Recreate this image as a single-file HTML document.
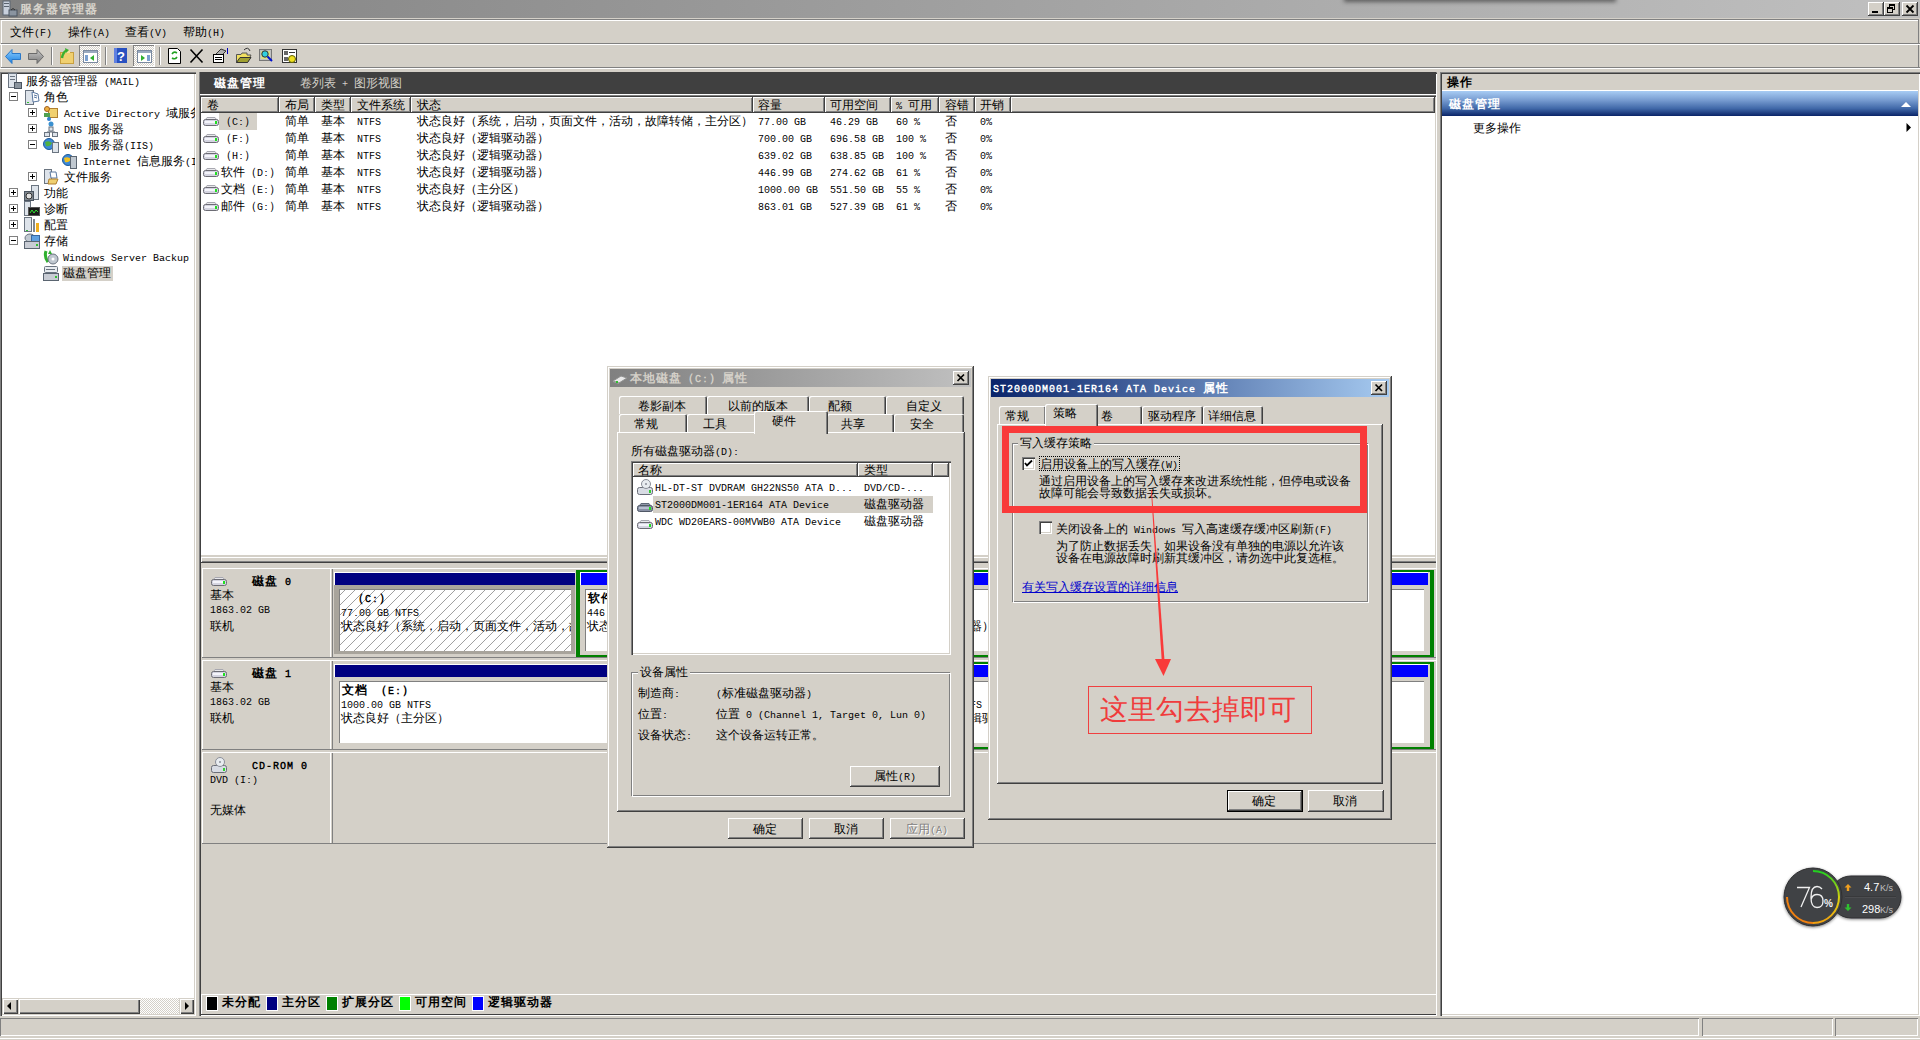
<!DOCTYPE html>
<html><head><meta charset="utf-8">
<style>
@font-face{font-family:"SS";src:local("Liberation Mono");size-adjust:83.333%}
html,body{margin:0;padding:0}
body{width:1920px;height:1040px;overflow:hidden;position:relative;background:#d4d0c8;font-family:"SS","Liberation Mono",sans-serif;font-size:12px;color:#000}
.a{position:absolute}
.t{position:absolute;white-space:pre;line-height:12px;font-size:12px;margin-top:2px}
.b{font-weight:bold;letter-spacing:1px}
.w{background:#fff}
.g{background:#d4d0c8}
.hl{position:absolute;height:1px}
.vl{position:absolute;width:1px}
.btn{box-shadow:inset -1px -1px #404040,inset 1px 1px #fff,inset -2px -2px #808080;background:#d4d0c8}
.sb{background:#d4d0c8;box-shadow:inset 1px 1px #d4d0c8,inset 2px 2px #fff,inset -1px -1px #404040,inset -2px -2px #808080}
svg{position:absolute;overflow:visible}
</style></head><body>

<!-- ===== title bar ===== -->
<div class="a" style="left:0;top:0;width:1920px;height:18px;background:linear-gradient(90deg,#808080,#c0c0c0)"></div>
<div class="a" style="left:1345px;top:-6px;width:270px;height:6px;background:#707070;box-shadow:0 1px 4px 1px rgba(40,40,40,.6)"></div>
<div class="t b" style="left:20px;top:3px;color:#d8d4cc">服务器管理器</div>
<div class="a btn" style="left:1868px;top:2px;width:16px;height:14px"><div class="a" style="left:4px;top:9px;width:6px;height:2px;background:#000"></div></div>
<div class="a btn" style="left:1884px;top:2px;width:16px;height:14px"><div class="a" style="left:5px;top:2px;width:6px;height:6px;border:1px solid #000;border-top-width:2px;box-sizing:border-box;background:transparent"></div><div class="a" style="left:3px;top:5px;width:6px;height:6px;border:1px solid #000;border-top-width:2px;box-sizing:border-box;background:#d4d0c8"></div></div>
<div class="a btn" style="left:1902px;top:2px;width:16px;height:14px"><svg width="16" height="14" style="left:0;top:0"><path d="M4.5 3.5 L11.5 10.5 M11.5 3.5 L4.5 10.5" stroke="#000" stroke-width="1.8"/></svg></div>
<svg width="16" height="16" style="left:2px;top:1px"><rect x="1" y="0" width="7" height="14" fill="#c8d0dc" stroke="#5a6470" stroke-width="1"/><rect x="2" y="2" width="5" height="1" fill="#5a6470"/><rect x="2" y="5" width="5" height="1" fill="#5a6470"/><rect x="7" y="9" width="8" height="6" fill="#8a94a0" stroke="#4a5460"/><path d="M9 9 Q11 6 13 9" stroke="#333" fill="none"/></svg>



<!-- ===== menu bar ===== -->
<div class="hl" style="left:0;top:19px;width:1919px;background:#808080"></div>
<div class="hl" style="left:1px;top:20px;width:1917px;background:#fff"></div>
<div class="vl" style="left:1px;top:20px;height:23px;background:#fff"></div>
<div class="vl" style="left:1918px;top:19px;height:50px;background:#808080"></div>
<div class="hl" style="left:1px;top:43px;width:1919px;background:#808080"></div>
<div class="hl" style="left:0;top:44px;width:1920px;background:#fff"></div>
<div class="t" style="left:10px;top:26px">文件(F)</div>
<div class="t" style="left:68px;top:26px">操作(A)</div>
<div class="t" style="left:125px;top:26px">查看(V)</div>
<div class="t" style="left:183px;top:26px">帮助(H)</div>

<!-- ===== toolbar ===== -->
<div class="vl" style="left:1px;top:45px;height:22px;background:#fff"></div>
<div class="hl" style="left:1px;top:67px;width:1919px;background:#808080"></div>
<div class="hl" style="left:0;top:68px;width:1920px;background:#fff"></div>
<svg width="320" height="24" style="left:0;top:45px">
<defs>
<pattern id="dots" width="2" height="2" patternUnits="userSpaceOnUse"><rect width="2" height="2" fill="#fff"/><rect width="1" height="1" fill="#d4d0c8"/><rect x="1" y="1" width="1" height="1" fill="#d4d0c8"/></pattern>
<linearGradient id="blueArr" x1="0" y1="0" x2="0" y2="1"><stop offset="0" stop-color="#8fd0ff"/><stop offset="1" stop-color="#1a7fe0"/></linearGradient>
<linearGradient id="grayArr" x1="0" y1="0" x2="0" y2="1"><stop offset="0" stop-color="#c8c8c8"/><stop offset="1" stop-color="#7a7a7a"/></linearGradient>
</defs>
<path d="M5.5 11.5 L12 4.5 L12 8.5 L20.5 8.5 L20.5 14.5 L12 14.5 L12 18.5 Z" fill="url(#blueArr)" stroke="#2a78c8"/>
<path d="M43.5 11.5 L37 4.5 L37 8.5 L28.5 8.5 L28.5 14.5 L37 14.5 L37 18.5 Z" fill="url(#grayArr)" stroke="#6a6a6a"/>
<rect x="51" y="2" width="1" height="18" fill="#808080"/><rect x="52" y="2" width="1" height="18" fill="#fff"/>
<rect x="60.5" y="7.5" width="13" height="11" fill="#f0d070" stroke="#c8a040"/><rect x="64" y="5" width="6" height="3" fill="#f6e0a0"/>
<path d="M62 13 Q63 7 67 5" stroke="#3ab030" stroke-width="2.5" fill="none"/><path d="M65 3 L69 5 L66 8 Z" fill="#3ab030"/>
<rect x="79" y="0" width="22" height="22" fill="url(#dots)"/><rect x="79" y="0" width="22" height="1" fill="#808080"/><rect x="79" y="0" width="1" height="22" fill="#808080"/><rect x="79" y="21" width="22" height="1" fill="#fff"/><rect x="100" y="0" width="1" height="22" fill="#fff"/>
<rect x="83.5" y="5.5" width="14" height="12" fill="#fff" stroke="#7a8aa0"/><rect x="84" y="6" width="13" height="2" fill="#9aaac0"/><rect x="85" y="10" width="3" height="6" fill="#7aa0d0"/><path d="M94 10 L90 13 L94 16 Z" fill="#30b030"/>
<rect x="105" y="2" width="1" height="18" fill="#808080"/><rect x="106" y="2" width="1" height="18" fill="#fff"/>
<rect x="114" y="3" width="13" height="15" fill="#2850c0"/><rect x="114" y="3" width="3" height="15" fill="#6080e0"/><text x="117" y="16" font-family="Liberation Sans" font-size="13" font-weight="bold" fill="#fff">?</text>
<rect x="133" y="0" width="22" height="22" fill="url(#dots)"/><rect x="133" y="0" width="22" height="1" fill="#808080"/><rect x="133" y="0" width="1" height="22" fill="#808080"/><rect x="133" y="21" width="22" height="1" fill="#fff"/><rect x="154" y="0" width="1" height="22" fill="#fff"/>
<rect x="137.5" y="5.5" width="14" height="12" fill="#fff" stroke="#7a8aa0"/><rect x="138" y="6" width="13" height="2" fill="#9aaac0"/><path d="M141 10 L145 13 L141 16 Z" fill="#30b030"/><rect x="147" y="10" width="3" height="6" fill="#7aa0d0"/>
<rect x="159" y="2" width="1" height="18" fill="#808080"/><rect x="160" y="2" width="1" height="18" fill="#fff"/>
<path d="M168.5 3.5 L177.5 3.5 L180.5 6.5 L180.5 18.5 L168.5 18.5 Z" fill="#fff" stroke="#000"/>
<path d="M172 9 Q174 6 177 8 M177 12 Q175 15 172 13" stroke="#20a020" stroke-width="1.6" fill="none"/>
<path d="M190.5 4.5 L202.5 17.5 M202.5 4.5 L190.5 17.5" stroke="#000" stroke-width="1.6"/>
<rect x="213.5" y="9.5" width="10" height="8" fill="#fff" stroke="#000"/><rect x="215" y="12" width="7" height="1" fill="#000"/><rect x="215" y="14" width="7" height="1" fill="#000"/><path d="M216 9 L221 4 L226 6 L223 9" fill="#b0b0b0" stroke="#333"/><rect x="227" y="3" width="1" height="6" fill="#0000c0"/>
<path d="M236.5 9.5 L241 9.5 L242 8 L247 8 L247 10 L251 10 L247.5 17.5 L236.5 17.5 Z" fill="#f0e060" stroke="#555"/><path d="M236.5 17.5 L240 12.5 L251 12.5 L247.5 17.5 Z" fill="#a0a030" stroke="#333"/><path d="M244 5 Q248 1 250 6" stroke="#333" fill="none"/>
<rect x="259.5" y="4.5" width="12" height="11" fill="#c0c0c0" stroke="#777"/><rect x="261" y="6" width="9" height="8" fill="#f0f060" opacity=".6"/><circle cx="265" cy="9" r="3.2" fill="#30d0e0" stroke="#333"/><path d="M267.5 11.5 L272 16" stroke="#0010d0" stroke-width="2"/>
<rect x="282.5" y="4.5" width="14" height="13" fill="#fff" stroke="#333"/><rect x="284" y="6" width="4" height="4" fill="#666"/><rect x="289" y="7" width="6" height="1" fill="#333"/><rect x="284" y="12" width="4" height="4" fill="#666"/><circle cx="292" cy="14" r="3.5" fill="#f0e020" stroke="#606000"/>
</svg>



<!-- ===== left tree panel ===== -->
<div class="a w" style="left:0;top:72px;width:196px;height:944px;box-shadow:inset 1px 1px #808080,inset 2px 2px #404040,inset -1px -1px #fff,inset -2px -2px #d4d0c8"></div>
<div class="a" style="left:0;top:0;width:195px;height:1015px;overflow:hidden"><svg width="16" height="16" style="left:6px;top:73px"><rect x="2.5" y="0.5" width="8" height="14" fill="#dde3ea" stroke="#6a7480"/><rect x="4" y="3" width="5" height="1" fill="#6a7480"/><rect x="4" y="6" width="5" height="1" fill="#6a7480"/><rect x="8.5" y="9.5" width="7" height="6" fill="#8a949e" stroke="#4a5460"/></svg><div class="t" style="left:26px;top:75px">服务器管理器 (MAIL)</div><div class="a" style="left:9px;top:92px;width:7px;height:7px;border:1px solid #808080;background:#fff"><div class="a" style="left:1px;top:3px;width:5px;height:1px;background:#000"></div></div><svg width="16" height="16" style="left:24px;top:89px"><rect x="1.5" y="1.5" width="8" height="14" fill="#dde3ea" stroke="#6a7480"/><rect x="3" y="13" width="2" height="1" fill="#30c030"/><path d="M8 3 L14 5 L15 12 L9 13 Z" fill="#fff" stroke="#5a78a0"/><path d="M10 6 L13 7 M10 8 L13 9" stroke="#5a78a0"/></svg><div class="t" style="left:44px;top:91px">角色</div><div class="a" style="left:28px;top:108px;width:7px;height:7px;border:1px solid #808080;background:#fff"><div class="a" style="left:1px;top:3px;width:5px;height:1px;background:#000"></div><div class="a" style="left:3px;top:1px;width:1px;height:5px;background:#000"></div></div><svg width="16" height="16" style="left:43px;top:105px"><rect x="5.5" y="3.5" width="9" height="9" fill="#f0d070" stroke="#b08030"/><circle cx="4" cy="4" r="2.5" fill="#f0b040" stroke="#a06020"/><rect x="1" y="8" width="6" height="4" fill="#50a050"/><circle cx="6" cy="14" r="2" fill="#3080d0"/></svg><div class="t" style="left:64px;top:107px">Active Directory 域服务</div><div class="a" style="left:28px;top:124px;width:7px;height:7px;border:1px solid #808080;background:#fff"><div class="a" style="left:1px;top:3px;width:5px;height:1px;background:#000"></div><div class="a" style="left:3px;top:1px;width:1px;height:5px;background:#000"></div></div><svg width="16" height="16" style="left:43px;top:121px"><circle cx="8" cy="3" r="2.5" fill="#3a90d0"/><rect x="6" y="6" width="4" height="4" fill="#dde3ea" stroke="#6a7480"/><rect x="1.5" y="11.5" width="5" height="4" fill="#dde3ea" stroke="#6a7480"/><rect x="9.5" y="11.5" width="5" height="4" fill="#dde3ea" stroke="#6a7480"/><path d="M8 10 V11 M4 11 H12" stroke="#6a7480"/></svg><div class="t" style="left:64px;top:123px">DNS 服务器</div><div class="a" style="left:28px;top:140px;width:7px;height:7px;border:1px solid #808080;background:#fff"><div class="a" style="left:1px;top:3px;width:5px;height:1px;background:#000"></div></div><svg width="16" height="16" style="left:43px;top:137px"><circle cx="6" cy="7" r="5.5" fill="#3a88d8" stroke="#1a5898"/><path d="M2 5 Q6 3 9 6 Q7 10 3 9 Z" fill="#50b040"/><rect x="9.5" y="5.5" width="6" height="10" fill="#dde3ea" stroke="#6a7480"/></svg><div class="t" style="left:64px;top:139px">Web 服务器(IIS)</div><svg width="16" height="16" style="left:62px;top:153px"><circle cx="6" cy="7" r="5.5" fill="#3a88d8" stroke="#1a5898"/><path d="M2 5 Q6 3 9 6 Q7 10 3 9 Z" fill="#f0c020"/><rect x="8.5" y="3.5" width="6" height="12" fill="#c0c8d0" stroke="#5a6470"/></svg><div class="t" style="left:83px;top:155px">Internet 信息服务(IIS)管理器</div><div class="a" style="left:28px;top:172px;width:7px;height:7px;border:1px solid #808080;background:#fff"><div class="a" style="left:1px;top:3px;width:5px;height:1px;background:#000"></div><div class="a" style="left:3px;top:1px;width:1px;height:5px;background:#000"></div></div><svg width="16" height="16" style="left:43px;top:169px"><rect x="1.5" y="0.5" width="7" height="14" fill="#dde3ea" stroke="#6a7480"/><path d="M7 3 L13 3 L14 9 L8 9 Z" fill="#fff" stroke="#5a78a0"/><path d="M6 10 L15 10 L13 15 L5 15 Z" fill="#f0d070" stroke="#b08030"/></svg><div class="t" style="left:64px;top:171px">文件服务</div><div class="a" style="left:9px;top:188px;width:7px;height:7px;border:1px solid #808080;background:#fff"><div class="a" style="left:1px;top:3px;width:5px;height:1px;background:#000"></div><div class="a" style="left:3px;top:1px;width:1px;height:5px;background:#000"></div></div><svg width="16" height="16" style="left:24px;top:185px"><rect x="7.5" y="0.5" width="7" height="14" fill="#dde3ea" stroke="#6a7480"/><rect x="0.5" y="6.5" width="9" height="9" fill="#808890" stroke="#4a5460"/><circle cx="5" cy="11" r="3" fill="#e0e0e0" stroke="#333"/></svg><div class="t" style="left:44px;top:187px">功能</div><div class="a" style="left:9px;top:204px;width:7px;height:7px;border:1px solid #808080;background:#fff"><div class="a" style="left:1px;top:3px;width:5px;height:1px;background:#000"></div><div class="a" style="left:3px;top:1px;width:1px;height:5px;background:#000"></div></div><svg width="16" height="16" style="left:24px;top:201px"><rect x="0.5" y="0.5" width="6" height="14" fill="#dde3ea" stroke="#6a7480"/><rect x="4.5" y="6.5" width="11" height="8" fill="#1a1a1a" stroke="#555"/><path d="M6 12 L8 9 L10 12 L12 9 L14 11" stroke="#30e030" fill="none"/></svg><div class="t" style="left:44px;top:203px">诊断</div><div class="a" style="left:9px;top:220px;width:7px;height:7px;border:1px solid #808080;background:#fff"><div class="a" style="left:1px;top:3px;width:5px;height:1px;background:#000"></div><div class="a" style="left:3px;top:1px;width:1px;height:5px;background:#000"></div></div><svg width="16" height="16" style="left:24px;top:217px"><rect x="0.5" y="0.5" width="7" height="14" fill="#dde3ea" stroke="#6a7480"/><rect x="2" y="13" width="2" height="1" fill="#30c030"/><rect x="9" y="2" width="2" height="13" fill="#808890"/><rect x="12" y="6" width="3" height="9" fill="#f0b020"/></svg><div class="t" style="left:44px;top:219px">配置</div><div class="a" style="left:9px;top:236px;width:7px;height:7px;border:1px solid #808080;background:#fff"><div class="a" style="left:1px;top:3px;width:5px;height:1px;background:#000"></div></div><svg width="16" height="16" style="left:24px;top:233px"><ellipse cx="6" cy="5" rx="5" ry="4" fill="#c0c8d0" stroke="#6a7480"/><rect x="7.5" y="2.5" width="8" height="6" fill="#60a0e0" stroke="#3a68a0"/><rect x="0.5" y="8.5" width="15" height="7" fill="#c8ccd4" stroke="#5a6470"/><rect x="12" y="11" width="2" height="2" fill="#30c030"/></svg><div class="t" style="left:44px;top:235px">存储</div><svg width="16" height="16" style="left:43px;top:249px"><path d="M3 2 Q1 8 5 13" stroke="#30b030" stroke-width="3" fill="none"/><circle cx="10" cy="10" r="5" fill="#c0c8d0" stroke="#6a7480"/><circle cx="10" cy="10" r="1.5" fill="#fff"/><path d="M7 1 L9 5 L5 5 Z" fill="#30b030"/></svg><div class="t" style="left:63px;top:251px">Windows Server Backup</div><svg width="16" height="16" style="left:43px;top:265px"><rect x="1.5" y="1.5" width="13" height="6" rx="1" fill="#e8ecf0" stroke="#6a7480"/><rect x="0.5" y="8.5" width="15" height="7" fill="#c8ccd4" stroke="#5a6470"/><rect x="3" y="4" width="9" height="1" fill="#6a7480"/><rect x="12" y="11" width="2" height="2" fill="#30c030"/></svg><div class="a" style="left:62px;top:266px;width:51px;height:15px;background:#d4d0c8"></div><div class="t" style="left:63px;top:267px">磁盘管理</div><div class="a sb" style="left:2px;top:998px;width:16px;height:16px"><svg width="16" height="16" style="left:0;top:0"><path d="M5 8 L9 4 L9 12 Z" fill="#000"/></svg></div>
<div class="a sb" style="left:18px;top:998px;width:122px;height:16px"></div>
<div class="a" style="left:140px;top:998px;width:39px;height:16px;background-image:repeating-conic-gradient(#fff 0 25%,#d4d0c8 0 50%);background-size:2px 2px"></div>
<div class="a sb" style="left:179px;top:998px;width:15px;height:16px"><svg width="16" height="16" style="left:0;top:0"><path d="M6 4 L10 8 L6 12 Z" fill="#000"/></svg></div></div>

<!-- ===== center panel ===== -->
<div class="a" style="left:199px;top:72px;width:1238px;height:944px;box-shadow:inset 1px 1px #808080,inset 2px 2px #404040,inset -1px -1px #fff,inset -2px -2px #d4d0c8"></div>
<div class="a" style="left:200px;top:72px;width:1236px;height:22px;background:#404040"></div>
<div class="t b" style="left:214px;top:77px;color:#fff">磁盘管理</div>
<div class="t" style="left:300px;top:77px;color:#d4d0c8">卷列表 + 图形视图</div>
<div class="a w" style="left:201px;top:97px;width:1234px;height:458px"></div><div class="hl" style="left:200px;top:94px;width:1236px;background:#fff"></div><div class="hl" style="left:200px;top:95px;width:1236px;background:#808080"></div><div class="hl" style="left:201px;top:96px;width:1235px;background:#404040"></div><div class="a" style="left:201px;top:97px;width:78px;height:16px;background:#d4d0c8;box-shadow:inset -1px -1px #404040,inset 1px 1px #fff,inset -2px -2px #808080"></div><div class="t" style="left:207px;top:99px">卷</div><div class="a" style="left:279px;top:97px;width:36px;height:16px;background:#d4d0c8;box-shadow:inset -1px -1px #404040,inset 1px 1px #fff,inset -2px -2px #808080"></div><div class="t" style="left:285px;top:99px">布局</div><div class="a" style="left:315px;top:97px;width:36px;height:16px;background:#d4d0c8;box-shadow:inset -1px -1px #404040,inset 1px 1px #fff,inset -2px -2px #808080"></div><div class="t" style="left:321px;top:99px">类型</div><div class="a" style="left:351px;top:97px;width:60px;height:16px;background:#d4d0c8;box-shadow:inset -1px -1px #404040,inset 1px 1px #fff,inset -2px -2px #808080"></div><div class="t" style="left:357px;top:99px">文件系统</div><div class="a" style="left:411px;top:97px;width:342px;height:16px;background:#d4d0c8;box-shadow:inset -1px -1px #404040,inset 1px 1px #fff,inset -2px -2px #808080"></div><div class="t" style="left:417px;top:99px">状态</div><div class="a" style="left:753px;top:97px;width:72px;height:16px;background:#d4d0c8;box-shadow:inset -1px -1px #404040,inset 1px 1px #fff,inset -2px -2px #808080"></div><div class="t" style="left:758px;top:99px">容量</div><div class="a" style="left:825px;top:97px;width:66px;height:16px;background:#d4d0c8;box-shadow:inset -1px -1px #404040,inset 1px 1px #fff,inset -2px -2px #808080"></div><div class="t" style="left:830px;top:99px">可用空间</div><div class="a" style="left:891px;top:97px;width:48px;height:16px;background:#d4d0c8;box-shadow:inset -1px -1px #404040,inset 1px 1px #fff,inset -2px -2px #808080"></div><div class="t" style="left:896px;top:99px">% 可用</div><div class="a" style="left:939px;top:97px;width:36px;height:16px;background:#d4d0c8;box-shadow:inset -1px -1px #404040,inset 1px 1px #fff,inset -2px -2px #808080"></div><div class="t" style="left:945px;top:99px">容错</div><div class="a" style="left:975px;top:97px;width:36px;height:16px;background:#d4d0c8;box-shadow:inset -1px -1px #404040,inset 1px 1px #fff,inset -2px -2px #808080"></div><div class="t" style="left:980px;top:99px">开销</div><div class="a" style="left:1011px;top:97px;width:424px;height:16px;background:#d4d0c8;box-shadow:inset -1px -1px #404040,inset 1px 1px #fff,inset -2px -2px #808080"></div><svg width="16" height="16" style="left:203px;top:113px"><path d="M2.5 6.5 L4 4.5 L12 4.5 L13.5 6.5" fill="#e8e8ec" stroke="#a8a8b0"/><rect x="0.5" y="6.5" width="15" height="6" rx="2" fill="#d4d4e0" stroke="#6c6c74"/><rect x="2" y="8" width="10" height="2" fill="#f4f4fa"/><rect x="12" y="8" width="2" height="3" fill="#20e020"/></svg><div class="a" style="left:219px;top:113px;width:38px;height:17px;background:#d4d0c8"></div><div class="t" style="left:220px;top:115px">（C:）</div><div class="t" style="left:285px;top:115px">简单</div><div class="t" style="left:321px;top:115px">基本</div><div class="t" style="left:357px;top:115px">NTFS</div><div class="t" style="left:417px;top:115px">状态良好（系统，启动，页面文件，活动，故障转储，主分区）</div><div class="t" style="left:758px;top:115px">77.00 GB</div><div class="t" style="left:830px;top:115px">46.29 GB</div><div class="t" style="left:896px;top:115px">60 %</div><div class="t" style="left:945px;top:115px">否</div><div class="t" style="left:980px;top:115px">0%</div><svg width="16" height="16" style="left:203px;top:130px"><path d="M2.5 6.5 L4 4.5 L12 4.5 L13.5 6.5" fill="#e8e8ec" stroke="#a8a8b0"/><rect x="0.5" y="6.5" width="15" height="6" rx="2" fill="#d4d4e0" stroke="#6c6c74"/><rect x="2" y="8" width="10" height="2" fill="#f4f4fa"/><rect x="12" y="8" width="2" height="3" fill="#20e020"/></svg><div class="t" style="left:220px;top:132px">（F:）</div><div class="t" style="left:285px;top:132px">简单</div><div class="t" style="left:321px;top:132px">基本</div><div class="t" style="left:357px;top:132px">NTFS</div><div class="t" style="left:417px;top:132px">状态良好（逻辑驱动器）</div><div class="t" style="left:758px;top:132px">700.00 GB</div><div class="t" style="left:830px;top:132px">696.58 GB</div><div class="t" style="left:896px;top:132px">100 %</div><div class="t" style="left:945px;top:132px">否</div><div class="t" style="left:980px;top:132px">0%</div><svg width="16" height="16" style="left:203px;top:147px"><path d="M2.5 6.5 L4 4.5 L12 4.5 L13.5 6.5" fill="#e8e8ec" stroke="#a8a8b0"/><rect x="0.5" y="6.5" width="15" height="6" rx="2" fill="#d4d4e0" stroke="#6c6c74"/><rect x="2" y="8" width="10" height="2" fill="#f4f4fa"/><rect x="12" y="8" width="2" height="3" fill="#20e020"/></svg><div class="t" style="left:220px;top:149px">（H:）</div><div class="t" style="left:285px;top:149px">简单</div><div class="t" style="left:321px;top:149px">基本</div><div class="t" style="left:357px;top:149px">NTFS</div><div class="t" style="left:417px;top:149px">状态良好（逻辑驱动器）</div><div class="t" style="left:758px;top:149px">639.02 GB</div><div class="t" style="left:830px;top:149px">638.85 GB</div><div class="t" style="left:896px;top:149px">100 %</div><div class="t" style="left:945px;top:149px">否</div><div class="t" style="left:980px;top:149px">0%</div><svg width="16" height="16" style="left:203px;top:164px"><path d="M2.5 6.5 L4 4.5 L12 4.5 L13.5 6.5" fill="#e8e8ec" stroke="#a8a8b0"/><rect x="0.5" y="6.5" width="15" height="6" rx="2" fill="#d4d4e0" stroke="#6c6c74"/><rect x="2" y="8" width="10" height="2" fill="#f4f4fa"/><rect x="12" y="8" width="2" height="3" fill="#20e020"/></svg><div class="t" style="left:221px;top:166px">软件（D:）</div><div class="t" style="left:285px;top:166px">简单</div><div class="t" style="left:321px;top:166px">基本</div><div class="t" style="left:357px;top:166px">NTFS</div><div class="t" style="left:417px;top:166px">状态良好（逻辑驱动器）</div><div class="t" style="left:758px;top:166px">446.99 GB</div><div class="t" style="left:830px;top:166px">274.62 GB</div><div class="t" style="left:896px;top:166px">61 %</div><div class="t" style="left:945px;top:166px">否</div><div class="t" style="left:980px;top:166px">0%</div><svg width="16" height="16" style="left:203px;top:181px"><path d="M2.5 6.5 L4 4.5 L12 4.5 L13.5 6.5" fill="#e8e8ec" stroke="#a8a8b0"/><rect x="0.5" y="6.5" width="15" height="6" rx="2" fill="#d4d4e0" stroke="#6c6c74"/><rect x="2" y="8" width="10" height="2" fill="#f4f4fa"/><rect x="12" y="8" width="2" height="3" fill="#20e020"/></svg><div class="t" style="left:221px;top:183px">文档（E:）</div><div class="t" style="left:285px;top:183px">简单</div><div class="t" style="left:321px;top:183px">基本</div><div class="t" style="left:357px;top:183px">NTFS</div><div class="t" style="left:417px;top:183px">状态良好（主分区）</div><div class="t" style="left:758px;top:183px">1000.00 GB</div><div class="t" style="left:830px;top:183px">551.50 GB</div><div class="t" style="left:896px;top:183px">55 %</div><div class="t" style="left:945px;top:183px">否</div><div class="t" style="left:980px;top:183px">0%</div><svg width="16" height="16" style="left:203px;top:198px"><path d="M2.5 6.5 L4 4.5 L12 4.5 L13.5 6.5" fill="#e8e8ec" stroke="#a8a8b0"/><rect x="0.5" y="6.5" width="15" height="6" rx="2" fill="#d4d4e0" stroke="#6c6c74"/><rect x="2" y="8" width="10" height="2" fill="#f4f4fa"/><rect x="12" y="8" width="2" height="3" fill="#20e020"/></svg><div class="t" style="left:221px;top:200px">邮件（G:）</div><div class="t" style="left:285px;top:200px">简单</div><div class="t" style="left:321px;top:200px">基本</div><div class="t" style="left:357px;top:200px">NTFS</div><div class="t" style="left:417px;top:200px">状态良好（逻辑驱动器）</div><div class="t" style="left:758px;top:200px">863.01 GB</div><div class="t" style="left:830px;top:200px">527.39 GB</div><div class="t" style="left:896px;top:200px">61 %</div><div class="t" style="left:945px;top:200px">否</div><div class="t" style="left:980px;top:200px">0%</div><div class="hl" style="left:201px;top:557px;width:1234px;background:#fff"></div><div class="hl" style="left:201px;top:561px;width:1235px;background:#808080"></div><div class="hl" style="left:200px;top:562px;width:1236px;background:#404040"></div><div class="vl" style="left:201px;top:557px;height:5px;background:#fff"></div>
<div class="hl" style="left:202px;top:568px;width:1234px;background:#fff"></div><div class="vl" style="left:202px;top:568px;height:89px;background:#fff"></div><div class="vl" style="left:330px;top:568px;height:89px;background:#fff"></div><div class="vl" style="left:332px;top:569px;height:88px;background:#808080"></div><div class="hl" style="left:202px;top:657px;width:1234px;background:#808080"></div><svg width="16" height="16" style="left:211px;top:573px"><path d="M2.5 6.5 L4 4.5 L12 4.5 L13.5 6.5" fill="#e8e8ec" stroke="#a8a8b0"/><rect x="0.5" y="6.5" width="15" height="6" rx="2" fill="#d4d4e0" stroke="#6c6c74"/><rect x="2" y="8" width="10" height="2" fill="#f4f4fa"/><rect x="12" y="8" width="2" height="3" fill="#20e020"/></svg><div class="t b" style="left:252px;top:575px">磁盘 0</div><div class="t" style="left:210px;top:589px">基本</div><div class="t" style="left:210px;top:603px">1863.02 GB</div><div class="t" style="left:210px;top:620px">联机</div><div class="hl" style="left:202px;top:660px;width:1234px;background:#fff"></div><div class="vl" style="left:202px;top:660px;height:89px;background:#fff"></div><div class="vl" style="left:330px;top:660px;height:89px;background:#fff"></div><div class="vl" style="left:332px;top:661px;height:88px;background:#808080"></div><div class="hl" style="left:202px;top:749px;width:1234px;background:#808080"></div><svg width="16" height="16" style="left:211px;top:665px"><path d="M2.5 6.5 L4 4.5 L12 4.5 L13.5 6.5" fill="#e8e8ec" stroke="#a8a8b0"/><rect x="0.5" y="6.5" width="15" height="6" rx="2" fill="#d4d4e0" stroke="#6c6c74"/><rect x="2" y="8" width="10" height="2" fill="#f4f4fa"/><rect x="12" y="8" width="2" height="3" fill="#20e020"/></svg><div class="t b" style="left:252px;top:667px">磁盘 1</div><div class="t" style="left:210px;top:681px">基本</div><div class="t" style="left:210px;top:695px">1863.02 GB</div><div class="t" style="left:210px;top:712px">联机</div><div class="hl" style="left:202px;top:752px;width:1234px;background:#fff"></div><div class="vl" style="left:202px;top:752px;height:91px;background:#fff"></div><div class="vl" style="left:330px;top:752px;height:91px;background:#fff"></div><div class="vl" style="left:332px;top:753px;height:90px;background:#808080"></div><div class="hl" style="left:202px;top:843px;width:1234px;background:#808080"></div><svg width="16" height="16" style="left:211px;top:757px"><rect x="0.5" y="8.5" width="15" height="7" rx="2" fill="#d8dce4" stroke="#6a6e78"/><rect x="12" y="11" width="2" height="3" fill="#30d030"/><circle cx="9" cy="5" r="4.5" fill="#e8ecf0" stroke="#8a8e98"/><circle cx="9" cy="5" r="1" fill="#8a8e98"/></svg><div class="t b" style="left:252px;top:759px">CD-ROM 0</div><div class="t" style="left:210px;top:773px">DVD (I:)</div><div class="t" style="left:210px;top:804px">无媒体</div><div class="a" style="left:334px;top:572px;width:241px;height:1px;background:#fff"></div><div class="a" style="left:334px;top:572px;width:1px;height:13px;background:#fff"></div><div class="a" style="left:335px;top:573px;width:240px;height:12px;background:#000080"></div><div class="a" style="left:334px;top:585px;width:241px;height:69px;background:#a8a49c"></div><div class="a" style="left:339px;top:589px;width:232px;height:62px;background:#fff;box-shadow:inset 1px 1px #808080"></div><div class="a" style="left:340px;top:590px;width:231px;height:61px;background:repeating-linear-gradient(135deg,#fff 0 3px,#a0a0a0 3px 4px,#fff 4px 7.07px)"></div><div class="a" style="left:340px;top:590px;width:231px;height:61px;overflow:hidden"><div class="t b" style="left:12px;top:2px">（C:）</div><div class="t" style="left:1px;top:16px">77.00 GB NTFS</div><div class="t" style="left:1px;top:30px">状态良好（系统，启动，页面文件，活动，故障转储，主分区）</div></div><div class="a" style="left:576px;top:570px;width:858px;height:87px;box-sizing:border-box;border:solid #008000;border-width:2px 4px 2px 4px"></div><div class="a" style="left:580px;top:572px;width:272px;height:1px;background:#fff"></div><div class="a" style="left:580px;top:572px;width:1px;height:13px;background:#fff"></div><div class="a" style="left:581px;top:573px;width:271px;height:12px;background:#0000ff"></div><div class="a" style="left:580px;top:585px;width:272px;height:69px;background:#d4d0c8"></div><div class="a" style="left:585px;top:589px;width:263px;height:62px;background:#fff;box-shadow:inset 1px 1px #808080"></div><div class="a" style="left:586px;top:590px;width:262px;height:61px;overflow:hidden"><div class="t b" style="left:2px;top:2px">软件 （D:）</div><div class="t" style="left:1px;top:16px">446.99 GB NTFS</div><div class="t" style="left:1px;top:30px">状态良好（逻辑驱动器）</div></div><div class="a" style="left:855px;top:572px;width:573px;height:1px;background:#fff"></div><div class="a" style="left:855px;top:572px;width:1px;height:13px;background:#fff"></div><div class="a" style="left:856px;top:573px;width:572px;height:12px;background:#0000ff"></div><div class="a" style="left:855px;top:585px;width:573px;height:69px;background:#d4d0c8"></div><div class="a" style="left:860px;top:589px;width:564px;height:62px;background:#fff;box-shadow:inset 1px 1px #808080"></div><div class="a" style="left:861px;top:590px;width:563px;height:61px;overflow:hidden"><div class="t b" style="left:8px;top:2px">（F:）</div><div class="t" style="left:1px;top:16px">700.00 GB NTFS</div><div class="t" style="left:1px;top:30px">状态良好（逻辑驱动器）</div></div><div class="a" style="left:334px;top:664px;width:552px;height:1px;background:#fff"></div><div class="a" style="left:334px;top:664px;width:1px;height:13px;background:#fff"></div><div class="a" style="left:335px;top:665px;width:551px;height:12px;background:#000080"></div><div class="a" style="left:334px;top:677px;width:552px;height:69px;background:#d4d0c8"></div><div class="a" style="left:339px;top:681px;width:543px;height:62px;background:#fff;box-shadow:inset 1px 1px #808080"></div><div class="a" style="left:340px;top:682px;width:542px;height:61px;overflow:hidden"><div class="t b" style="left:2px;top:2px">文档 （E:）</div><div class="t" style="left:1px;top:16px">1000.00 GB NTFS</div><div class="t" style="left:1px;top:30px">状态良好（主分区）</div></div><div class="a" style="left:887px;top:662px;width:547px;height:87px;box-sizing:border-box;border:solid #008000;border-width:2px 4px 2px 4px"></div><div class="a" style="left:891px;top:664px;width:537px;height:1px;background:#fff"></div><div class="a" style="left:891px;top:664px;width:1px;height:13px;background:#fff"></div><div class="a" style="left:892px;top:665px;width:536px;height:12px;background:#0000ff"></div><div class="a" style="left:891px;top:677px;width:537px;height:69px;background:#d4d0c8"></div><div class="a" style="left:896px;top:681px;width:528px;height:62px;background:#fff;box-shadow:inset 1px 1px #808080"></div><div class="a" style="left:897px;top:682px;width:527px;height:61px;overflow:hidden"><div class="t b" style="left:2px;top:2px">邮件 （G:）</div><div class="t" style="left:1px;top:16px">863.01 GB NTFS</div><div class="t" style="left:1px;top:30px">状态良好（逻辑驱动器）</div></div><div class="a" style="left:201px;top:994px;width:1235px;height:20px;background:#d4d0c8;box-shadow:inset 1px 1px #fff"></div><div class="a" style="left:206px;top:996px;width:12px;height:15px;background:#fff"></div><div class="a" style="left:207px;top:997px;width:10px;height:13px;background:#000000"></div><div class="t b" style="left:222px;top:996px">未分配</div><div class="a" style="left:266px;top:996px;width:12px;height:15px;background:#fff"></div><div class="a" style="left:267px;top:997px;width:10px;height:13px;background:#000080"></div><div class="t b" style="left:282px;top:996px">主分区</div><div class="a" style="left:326px;top:996px;width:12px;height:15px;background:#fff"></div><div class="a" style="left:327px;top:997px;width:10px;height:13px;background:#008000"></div><div class="t b" style="left:342px;top:996px">扩展分区</div><div class="a" style="left:399px;top:996px;width:12px;height:15px;background:#fff"></div><div class="a" style="left:400px;top:997px;width:10px;height:13px;background:#00ff00"></div><div class="t b" style="left:415px;top:996px">可用空间</div><div class="a" style="left:472px;top:996px;width:12px;height:15px;background:#fff"></div><div class="a" style="left:473px;top:997px;width:10px;height:13px;background:#0000ff"></div><div class="t b" style="left:488px;top:996px">逻辑驱动器</div><div class="hl" style="left:200px;top:1014px;width:1236px;background:#404040"></div>

<!-- ===== right panel ===== -->
<div class="a w" style="left:1440px;top:72px;width:480px;height:944px;box-shadow:inset 1px 1px #808080,inset 2px 2px #404040,inset -1px -1px #fff,inset -2px -2px #d4d0c8"></div>
<div class="a" style="left:1442px;top:74px;width:476px;height:16px;background:#d4d0c8"></div>
<div class="hl" style="left:1442px;top:90px;width:476px;background:#fff"></div>
<div class="t b" style="left:1447px;top:76px">操作</div>
<div class="a" style="left:1442px;top:91px;width:476px;height:25px;background:linear-gradient(180deg,#a8ccf4 0%,#7a9ed2 35%,#4068a8 70%,#0a2468 100%)"></div>
<div class="t b" style="left:1449px;top:98px;color:#fff">磁盘管理</div>
<svg width="12" height="8" style="left:1900px;top:100px"><path d="M1 7 L6 2 L11 7 Z" fill="#fff"/></svg>
<div class="t" style="left:1473px;top:122px">更多操作</div>
<svg width="6" height="10" style="left:1906px;top:123px"><path d="M0.5 0 L5 4.5 L0.5 9 Z" fill="#000"/></svg>


<!-- ===== status bar ===== -->
<div class="a" style="left:0;top:1018px;width:1699px;height:18px;box-shadow:inset 1px 1px #808080,inset -1px -1px #fff"></div>
<div class="a" style="left:1702px;top:1018px;width:131px;height:18px;box-shadow:inset 1px 1px #808080,inset -1px -1px #fff"></div>
<div class="a" style="left:1835px;top:1018px;width:83px;height:18px;box-shadow:inset 1px 1px #808080,inset -1px -1px #fff"></div>
<div class="hl" style="left:0;top:1038px;width:1920px;background:#fff"></div>

<!-- ===== dialogs ===== -->
<div class="a" style="left:607px;top:366px;width:367px;height:482px;background:#d4d0c8;box-shadow:inset -1px -1px #404040,inset 1px 1px #d4d0c8,inset -2px -2px #808080,inset 2px 2px #fff"></div><div class="a" style="left:610px;top:369px;width:361px;height:18px;background:linear-gradient(90deg,#808080,#c0c0c0)"></div><svg width="16" height="16" style="left:612px;top:371px"><path d="M1 10 L9 5 L15 7 L7 12 Z" fill="#e8e8e8" stroke="#909090"/><path d="M1 10 L7 12 L7 13 L1 11 Z" fill="#a0a0a0"/><rect x="4" y="10" width="2" height="2" fill="#30c030"/></svg><div class="t b" style="left:630px;top:372px;color:#d4d0c8">本地磁盘（C:）属性</div><div class="a" style="left:953px;top:371px;width:16px;height:14px;background:#d4d0c8;box-shadow:inset -1px -1px #404040,inset 1px 1px #fff,inset -2px -2px #808080"></div><svg width="16" height="14" style="left:953px;top:371px"><path d="M4.5 3.5 L11 10 M11 3.5 L4.5 10" stroke="#000" stroke-width="1.7"/></svg><div class="a" style="left:619px;top:396px;width:88px;height:18px;background:#d4d0c8;border-radius:2px 2px 0 0;box-shadow:inset 1px 1px #fff,inset -1px 0 #404040,inset -2px 0 #808080"></div><div class="t" style="left:638px;top:400px">卷影副本</div><div class="a" style="left:707px;top:396px;width:102px;height:18px;background:#d4d0c8;border-radius:2px 2px 0 0;box-shadow:inset 1px 1px #fff,inset -1px 0 #404040,inset -2px 0 #808080"></div><div class="t" style="left:728px;top:400px">以前的版本</div><div class="a" style="left:809px;top:396px;width:77px;height:18px;background:#d4d0c8;border-radius:2px 2px 0 0;box-shadow:inset 1px 1px #fff,inset -1px 0 #404040,inset -2px 0 #808080"></div><div class="t" style="left:828px;top:400px">配额</div><div class="a" style="left:886px;top:396px;width:78px;height:18px;background:#d4d0c8;border-radius:2px 2px 0 0;box-shadow:inset 1px 1px #fff,inset -1px 0 #404040,inset -2px 0 #808080"></div><div class="t" style="left:906px;top:400px">自定义</div><div class="a" style="left:619px;top:414px;width:68px;height:19px;background:#d4d0c8;border-radius:2px 2px 0 0;box-shadow:inset 1px 1px #fff,inset -1px 0 #404040,inset -2px 0 #808080"></div><div class="t" style="left:634px;top:418px">常规</div><div class="a" style="left:687px;top:414px;width:69px;height:19px;background:#d4d0c8;border-radius:2px 2px 0 0;box-shadow:inset 1px 1px #fff,inset -1px 0 #404040,inset -2px 0 #808080"></div><div class="t" style="left:703px;top:418px">工具</div><div class="a" style="left:827px;top:414px;width:67px;height:19px;background:#d4d0c8;border-radius:2px 2px 0 0;box-shadow:inset 1px 1px #fff,inset -1px 0 #404040,inset -2px 0 #808080"></div><div class="t" style="left:841px;top:418px">共享</div><div class="a" style="left:894px;top:414px;width:70px;height:19px;background:#d4d0c8;border-radius:2px 2px 0 0;box-shadow:inset 1px 1px #fff,inset -1px 0 #404040,inset -2px 0 #808080"></div><div class="t" style="left:910px;top:418px">安全</div><div class="a" style="left:617px;top:432px;width:348px;height:380px;box-shadow:inset -1px -1px #404040,inset 1px 1px #fff,inset -2px -2px #808080"></div><div class="a" style="left:754px;top:411px;width:74px;height:23px;background:#d4d0c8;border-radius:2px 2px 0 0;box-shadow:inset 1px 1px #fff,inset -1px 0 #404040,inset -2px 0 #808080"></div><div class="t" style="left:772px;top:415px">硬件</div><div class="t" style="left:631px;top:445px">所有磁盘驱动器(D):</div><div class="a" style="left:631px;top:461px;width:320px;height:194px;background:#fff;box-shadow:inset 1px 1px #808080,inset 2px 2px #404040,inset -1px -1px #fff,inset -2px -2px #d4d0c8"></div><div class="a" style="left:633px;top:463px;width:225px;height:14px;background:#d4d0c8;box-shadow:inset -1px -1px #404040,inset 1px 1px #fff,inset -2px -2px #808080"></div><div class="t" style="left:638px;top:464px">名称</div><div class="a" style="left:858px;top:463px;width:75px;height:14px;background:#d4d0c8;box-shadow:inset -1px -1px #404040,inset 1px 1px #fff,inset -2px -2px #808080"></div><div class="t" style="left:864px;top:464px">类型</div><div class="a" style="left:933px;top:463px;width:16px;height:14px;background:#d4d0c8;box-shadow:inset -1px -1px #404040,inset 1px 1px #fff,inset -2px -2px #808080"></div><div class="a" style="left:653px;top:496px;width:280px;height:17px;background:#d4d0c8"></div><svg width="16" height="16" style="left:637px;top:479px"><rect x="0.5" y="8.5" width="15" height="7" rx="2" fill="#d8dce4" stroke="#6a6e78"/><rect x="12" y="11" width="2" height="3" fill="#30d030"/><circle cx="9" cy="5" r="4.5" fill="#e8ecf0" stroke="#8a8e98"/><circle cx="9" cy="5" r="1" fill="#8a8e98"/></svg><div class="t" style="left:655px;top:481px">HL-DT-ST DVDRAM GH22NS50 ATA D...</div><div class="t" style="left:864px;top:481px">DVD/CD-...</div><svg width="16" height="16" style="left:637px;top:496px"><path d="M2.5 9.5 L4 7.5 L12 7.5 L13.5 9.5" fill="#9098a8" stroke="#606878"/><rect x="0.5" y="9.5" width="15" height="6" rx="2" fill="#8890a4" stroke="#505866"/><rect x="2" y="11" width="10" height="2" fill="#b8c0d0"/><rect x="12" y="11" width="2" height="3" fill="#20e020"/></svg><div class="t" style="left:655px;top:498px">ST2000DM001-1ER164 ATA Device</div><div class="t" style="left:864px;top:498px">磁盘驱动器</div><svg width="16" height="16" style="left:637px;top:513px"><path d="M2.5 9.5 L4 7.5 L12 7.5 L13.5 9.5" fill="#e8e8ec" stroke="#a8a8b0"/><rect x="0.5" y="9.5" width="15" height="6" rx="2" fill="#d4d4e0" stroke="#6c6c74"/><rect x="2" y="11" width="10" height="2" fill="#f4f4fa"/><rect x="12" y="11" width="2" height="3" fill="#20e020"/></svg><div class="t" style="left:655px;top:515px">WDC WD20EARS-00MVWB0 ATA Device</div><div class="t" style="left:864px;top:515px">磁盘驱动器</div><div class="a" style="left:631px;top:672px;width:319px;height:124px;border:1px solid #808080;box-sizing:border-box"></div><div class="a" style="left:632px;top:673px;width:319px;height:124px;border:1px solid #fff;box-sizing:border-box"></div><div class="a" style="left:638px;top:670px;width:52px;height:6px;background:#d4d0c8"></div><div class="t" style="left:640px;top:666px">设备属性</div><div class="t" style="left:638px;top:687px">制造商:</div><div class="t" style="left:716px;top:687px">(标准磁盘驱动器)</div><div class="t" style="left:638px;top:708px">位置:</div><div class="t" style="left:716px;top:708px">位置 0 (Channel 1, Target 0, Lun 0)</div><div class="t" style="left:638px;top:729px">设备状态:</div><div class="t" style="left:716px;top:729px">这个设备运转正常。</div><div class="a" style="left:850px;top:766px;width:90px;height:21px;background:#d4d0c8;box-shadow:inset -1px -1px #404040,inset 1px 1px #fff,inset -2px -2px #808080"></div><div class="t" style="left:874px;top:770px">属性(R)</div><div class="a" style="left:728px;top:818px;width:75px;height:21px;background:#d4d0c8;box-shadow:inset -1px -1px #404040,inset 1px 1px #fff,inset -2px -2px #808080"></div><div class="t" style="left:753px;top:823px">确定</div><div class="a" style="left:809px;top:818px;width:75px;height:21px;background:#d4d0c8;box-shadow:inset -1px -1px #404040,inset 1px 1px #fff,inset -2px -2px #808080"></div><div class="t" style="left:834px;top:823px">取消</div><div class="a" style="left:890px;top:818px;width:75px;height:21px;background:#d4d0c8;box-shadow:inset -1px -1px #404040,inset 1px 1px #fff,inset -2px -2px #808080"></div><div class="t" style="left:907px;top:824px;color:#fff">应用(A)</div><div class="t" style="left:906px;top:823px;color:#808080">应用(A)</div>
<div class="a" style="left:988px;top:376px;width:404px;height:444px;background:#d4d0c8;box-shadow:inset -1px -1px #404040,inset 1px 1px #d4d0c8,inset -2px -2px #808080,inset 2px 2px #fff"></div><div class="a" style="left:991px;top:379px;width:398px;height:18px;background:linear-gradient(90deg,#0a246a,#a6caf0)"></div><div class="t b" style="left:993px;top:382px;color:#fff">ST2000DM001-1ER164 ATA Device 属性</div><div class="a" style="left:1371px;top:381px;width:16px;height:14px;background:#d4d0c8;box-shadow:inset -1px -1px #404040,inset 1px 1px #fff,inset -2px -2px #808080"></div><svg width="16" height="14" style="left:1371px;top:381px"><path d="M4.5 3.5 L11 10 M11 3.5 L4.5 10" stroke="#000" stroke-width="1.7"/></svg><div class="a" style="left:999px;top:406px;width:47px;height:19px;background:#d4d0c8;border-radius:2px 2px 0 0;box-shadow:inset 1px 1px #fff,inset -1px 0 #404040,inset -2px 0 #808080"></div><div class="t" style="left:1005px;top:410px">常规</div><div class="a" style="left:1096px;top:406px;width:46px;height:19px;background:#d4d0c8;border-radius:2px 2px 0 0;box-shadow:inset 1px 1px #fff,inset -1px 0 #404040,inset -2px 0 #808080"></div><div class="t" style="left:1101px;top:410px">卷</div><div class="a" style="left:1142px;top:406px;width:61px;height:19px;background:#d4d0c8;border-radius:2px 2px 0 0;box-shadow:inset 1px 1px #fff,inset -1px 0 #404040,inset -2px 0 #808080"></div><div class="t" style="left:1148px;top:410px">驱动程序</div><div class="a" style="left:1203px;top:406px;width:60px;height:19px;background:#d4d0c8;border-radius:2px 2px 0 0;box-shadow:inset 1px 1px #fff,inset -1px 0 #404040,inset -2px 0 #808080"></div><div class="t" style="left:1208px;top:410px">详细信息</div><div class="a" style="left:997px;top:424px;width:386px;height:360px;box-shadow:inset -1px -1px #404040,inset 1px 1px #fff,inset -2px -2px #808080"></div><div class="a" style="left:1045px;top:404px;width:53px;height:22px;background:#d4d0c8;border-radius:2px 2px 0 0;box-shadow:inset 1px 1px #fff,inset -1px 0 #404040,inset -2px 0 #808080"></div><div class="t" style="left:1053px;top:407px">策略</div><div class="a" style="left:1012px;top:443px;width:356px;height:159px;border:1px solid #808080;box-sizing:border-box"></div><div class="a" style="left:1013px;top:444px;width:356px;height:159px;border:1px solid #fff;box-sizing:border-box"></div><div class="a" style="left:1018px;top:441px;width:76px;height:6px;background:#d4d0c8"></div><div class="t" style="left:1020px;top:437px">写入缓存策略</div><div class="a" style="left:1022px;top:457px;width:13px;height:13px;background:#fff;box-shadow:inset 1px 1px #808080,inset 2px 2px #404040,inset -1px -1px #fff,inset -2px -2px #d4d0c8"></div><svg width="13" height="13" style="left:1022px;top:457px"><path d="M3 6 L5 8.5 L10 3.5" stroke="#000" stroke-width="1.8" fill="none"/></svg><div class="a" style="left:1039px;top:456px;width:141px;height:15px;box-sizing:border-box;border:1px dotted #000"></div><div class="t" style="left:1040px;top:458px">启用设备上的写入缓存(W)</div><div class="t" style="left:1039px;top:475px">通过启用设备上的写入缓存来改进系统性能，但停电或设备</div><div class="t" style="left:1039px;top:487px">故障可能会导致数据丢失或损坏。</div><div class="a" style="left:1039px;top:521px;width:13px;height:13px;background:#fff;box-shadow:inset 1px 1px #808080,inset 2px 2px #404040,inset -1px -1px #fff,inset -2px -2px #d4d0c8"></div><div class="t" style="left:1056px;top:523px">关闭设备上的 Windows 写入高速缓存缓冲区刷新(F)</div><div class="t" style="left:1056px;top:540px">为了防止数据丢失，如果设备没有单独的电源以允许该</div><div class="t" style="left:1056px;top:552px">设备在电源故障时刷新其缓冲区，请勿选中此复选框。</div><div class="t" style="left:1022px;top:581px;color:#0000cc;text-decoration:underline">有关写入缓存设置的详细信息</div><div class="a" style="left:1227px;top:790px;width:76px;height:22px;background:#d4d0c8;box-shadow:inset 0 0 0 1px #000,inset -2px -2px #404040,inset 2px 2px #fff,inset -3px -3px #808080"></div><div class="t" style="left:1252px;top:795px">确定</div><div class="a" style="left:1308px;top:790px;width:76px;height:22px;background:#d4d0c8;box-shadow:inset -1px -1px #404040,inset 1px 1px #fff,inset -2px -2px #808080"></div><div class="t" style="left:1333px;top:795px">取消</div>
<div class="a" style="left:1002px;top:426px;width:365px;height:87px;box-sizing:border-box;border:7px solid #f93a3a"></div>
<svg width="40" height="200" style="left:1140px;top:485px"><path d="M11 5 L11.8 5 L24.4 174 L21.6 174 Z" fill="#f93a3a"/><path d="M15 174 L31 174 L23.5 191 Z" fill="#f93a3a"/></svg>
<div class="a" style="left:1088px;top:686px;width:224px;height:48px;box-sizing:border-box;border:1px solid #f04040"></div>
<div class="a" style="left:1100px;top:692px;white-space:pre;font-family:'Liberation Serif',serif;font-size:28px;line-height:36px;color:#f03c3c">这里勾去掉即可</div>

<svg width="130" height="70" style="left:1780px;top:862px">
<defs><filter id="sh" x="-20%" y="-20%" width="140%" height="140%"><feGaussianBlur in="SourceAlpha" stdDeviation="1.5"/><feOffset dy="1"/><feComponentTransfer><feFuncA type="linear" slope="0.5"/></feComponentTransfer><feMerge><feMergeNode/><feMergeNode in="SourceGraphic"/></feMerge></filter>
<linearGradient id="arcg" x1="0" y1="0" x2="0" y2="1"><stop offset="0" stop-color="#20d020"/><stop offset=".55" stop-color="#e0d010"/><stop offset="1" stop-color="#f0a010"/></linearGradient></defs>
<g filter="url(#sh)">
<rect x="50" y="14" width="71" height="42" rx="21" fill="#414244" stroke="#2e2f31"/>
<circle cx="33" cy="35" r="29" fill="#414244" stroke="#2e2f31"/>
</g>
<line x1="65" y1="34.5" x2="116" y2="34.5" stroke="#38393b"/>
<line x1="65" y1="35.5" x2="116" y2="35.5" stroke="#4c4d50"/>
<path d="M33 9 A26 26 0 0 1 59 35 A26 26 0 0 1 33 61" stroke="url(#arcg)" stroke-width="2" fill="none"/>
<path d="M33 61 A26 26 0 0 1 7 35" stroke="#f08010" stroke-width="2" fill="none"/>
<path d="M17 25.5 L29.5 25.5 L21 45" stroke="#f0f0f0" stroke-width="1.3" fill="none"/>
<path d="M42 27 Q40 24.5 37 24.5 Q31 24.5 31 35.5 Q31 45.5 37 45.5 Q43 45.5 43 39 Q43 32.5 37 32.5 Q32.5 32.5 31.3 37" stroke="#f0f0f0" stroke-width="1.3" fill="none"/>
<text x="44" y="45" font-family="Liberation Sans" font-size="10" font-weight="bold" fill="#f0f0f0">%</text>
<path d="M68 22 L64.5 25.5 L66.8 25.5 L66.8 29 L69.2 29 L69.2 25.5 L71.5 25.5 Z" fill="#f0a020"/>
<path d="M68 49 L64.5 45.5 L66.8 45.5 L66.8 42 L69.2 42 L69.2 45.5 L71.5 45.5 Z" fill="#30c030"/>
<text x="84" y="28.5" font-family="Liberation Sans" font-size="11" fill="#fff">4.7</text>
<text x="100" y="29" font-family="Liberation Sans" font-size="9" fill="#c0c0c0">K/s</text>
<text x="82" y="50.5" font-family="Liberation Sans" font-size="11" fill="#fff">298</text>
<text x="100" y="51" font-family="Liberation Sans" font-size="9" fill="#c0c0c0">K/s</text>
</svg>

</body></html>
